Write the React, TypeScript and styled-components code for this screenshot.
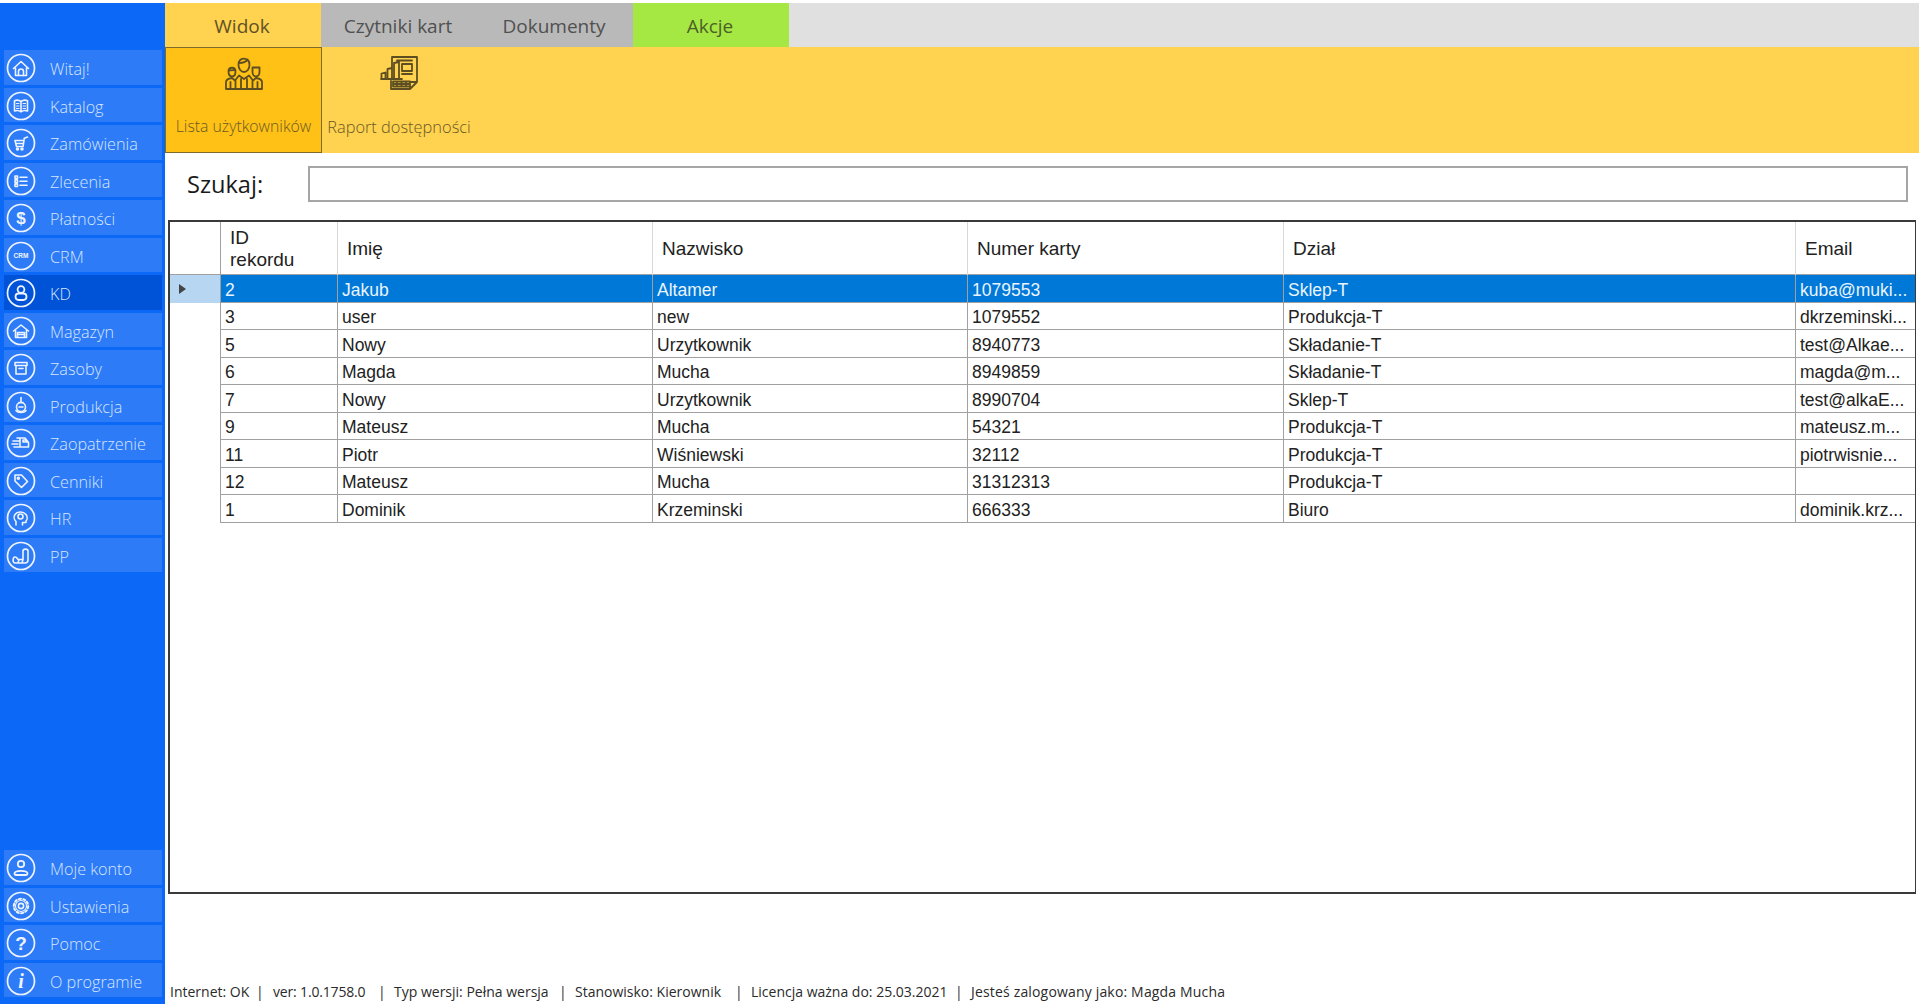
import React from "react";
import styled, { createGlobalStyle } from "styled-components";

const Global = createGlobalStyle`
  html, body { margin: 0; padding: 0; background: #fff; }
  * { box-sizing: border-box; }
  #root { width: 1919px; height: 1004px; overflow: hidden; }
`;

const Page = styled.div`
  display: grid;
  grid-template-columns: 165px 1fr;
  height: 1004px;
  padding-top: 3px;
  background: #fff;
`;

const Sidebar = styled.nav`
  display: flex;
  flex-direction: column;
  background: #0c69f8;
  padding: 47px 3px 7px 4px;
`;

const NavGroup = styled.div<{ $bottom?: boolean }>`
  display: flex;
  flex-direction: column;
  gap: 3px;
  margin-top: ${(p) => (p.$bottom ? "auto" : "0")};
`;

const NavItem = styled.div<{ $active?: boolean }>`
  display: flex;
  align-items: center;
  height: 34.5px;
  padding-left: 2px;
  gap: 14px;
  background: ${(p) => (p.$active ? "#0052d6" : "#2d7bf7")};
  color: #d8e6ff;
  font: 300 16.2px "Open Sans", sans-serif;
  white-space: nowrap;
`;

const NavLabel = styled.span`
  padding-top: 4px;
`;

const Ring = styled.svg`
  flex: none;
  width: 30px;
  height: 30px;
  margin-top: 1.5px;
  fill: none;
  stroke: #eef4ff;
  stroke-width: 1.6;
  stroke-linecap: round;
  stroke-linejoin: round;
  overflow: visible;
`;

const Main = styled.main`
  display: flex;
  flex-direction: column;
  min-width: 0;
`;

const TabBar = styled.div`
  display: flex;
  height: 44px;
  background: #e0e0e0;
`;

const Tab = styled.div<{ $bg: string; $fg: string }>`
  width: 156px;
  display: flex;
  align-items: center;
  justify-content: center;
  padding: 1px 2px 0 0;
  background: ${(p) => p.$bg};
  color: ${(p) => p.$fg};
  font: 400 19px "Open Sans", sans-serif;
`;

const Toolbar = styled.div`
  display: flex;
  height: 106px;
  background: #ffd24f;
`;

const ToolButton = styled.div<{ $selected?: boolean }>`
  width: ${(p) => (p.$selected ? "157px" : "154px")};
  display: flex;
  flex-direction: column;
  align-items: center;
  padding-top: 8px;
  background: ${(p) => (p.$selected ? "#ffc116" : "transparent")};
  box-shadow: ${(p) => (p.$selected ? "inset 0 0 0 1px #7d6a2c" : "none")};
  color: #6a5925;
  font: 300 ${(p) => (p.$selected ? "15.8px" : "16.4px")} "Open Sans", sans-serif;
  white-space: nowrap;
`;

const ToolIcon = styled.svg`
  width: 38px;
  height: 36px;
  fill: none;
  stroke: #5d4e22;
  stroke-width: 1.8;
  stroke-linejoin: round;
  stroke-linecap: round;
  margin-bottom: 24px;
`;

const SearchRow = styled.div`
  display: flex;
  align-items: center;
  height: 48px;
  margin-top: 7px;
  padding: 0 11px 0 22px;
`;

const SearchLabel = styled.label`
  width: 121px;
  color: #1a1a1a;
  font: 400 23.6px "Open Sans", sans-serif;
`;

const SearchInput = styled.div`
  flex: 1;
  height: 36px;
  border: 2px solid #a6a6a6;
  background: #fff;
`;

const Grid = styled.div`
  height: 674px;
  margin: 12px 3px 0 3px;
  border: 2px solid #3a3a3a;
  border-right-width: 1px;
  font-family: "Liberation Sans", Arial, sans-serif;
  color: #222;
`;

const columns = "51px 117px 315px 315px 316px 512px 1fr";

const HeadRow = styled.div`
  display: grid;
  grid-template-columns: ${columns};
  height: 53px;
`;

const HeadCell = styled.div`
  display: flex;
  align-items: center;
  padding-left: 9px;
  border-right: 1px solid #d8d8d8;
  font-size: 19px;
  line-height: 22px;
  white-space: pre-line;
  &:first-child { border-right-color: #a0a0a0; }
  &:last-child { border-right: 0; }
`;

const DataRow = styled.div<{ $selected?: boolean }>`
  display: grid;
  grid-template-columns: ${columns};
  height: 27.5px;
  background: ${(p) => (p.$selected ? "#0078d7" : "#fff")};
  color: ${(p) => (p.$selected ? "#eaf4ff" : "#222")};
  box-shadow: 0 -1px 0 #a0a0a0, inset 0 -1px 0 #a0a0a0;
`;

const Cell = styled.div`
  display: flex;
  align-items: center;
  padding: 3px 0 0 4px;
  border-right: 1px solid #a0a0a0;
  font-size: 17.5px;
  white-space: nowrap;
  overflow: hidden;
  &:last-child { border-right: 0; }
`;

const RowHeader = styled.div<{ $selected?: boolean }>`
  display: flex;
  align-items: center;
  padding-left: 9px;
  border-right: 1px solid #a0a0a0;
  background: ${(p) => (p.$selected ? "#b6d6f2" : "#fff")};
`;

const Arrow = styled.span`
  width: 0;
  height: 0;
  border-style: solid;
  border-width: 5.5px 0 5.5px 7px;
  border-color: transparent transparent transparent #444;
`;

const Status = styled.footer`
  display: flex;
  align-items: center;
  margin-top: auto;
  height: 40px;
  padding: 14px 0 0 5px;
  color: #2a2a2a;
  font: 400 14px "Open Sans", sans-serif;
  white-space: nowrap;
`;

const StatusPart = styled.span<{ $w: number; $ls: number }>`
  width: ${(p) => p.$w}px;
  letter-spacing: ${(p) => p.$ls}px;
  flex: none;
`;

const Bar = styled.span<{ $wide?: boolean }>`
  width: ${(p) => (p.$wide ? "17px" : "16px")};
  flex: none;
`;

type N = { label: string; icon: React.ReactNode; active?: boolean };

const tx = { fill: "#eef4ff", stroke: "none", textAnchor: "middle" as const, fontFamily: "'Liberation Sans', sans-serif" };

const top: N[] = [
  { label: "Witaj!", icon: <><path d="M7.500 15.500 15 8.500l7.500 7M9.500 14.500V22.500h11v-8" /><path d="M12.500 22.500v-4a2.500 2.500 0 0 1 5 0v4" /></> },
  { label: "Katalog", icon: <><path d="M15 10.500c-1.800-1.400-4.500-1.600-6.500-.8V20c2-.8 4.700-.6 6.500.8 1.800-1.400 4.500-1.600 6.500-.8V9.700c-2-.8-4.700-.6-6.500.8zM15 10.500v10.300" /><path d="M10.500 12.500h2.500M10.500 15h2.500M10.500 17.500h2.500M17 12.500h2.500M17 15h2.500M17 17.500h2.500" strokeWidth="1.100" /></> },
  { label: "Zamówienia", icon: <><path d="M21.500 9l-3.200 1.200-1.200 8.300H10.500L9 12.500h8.800M10 15.500h7.400" /><circle cx="11.500" cy="21" r="1" /><circle cx="16" cy="21" r="1" /></> },
  { label: "Zlecenia", icon: <path d="M9 10h2.500v2.500H9zM9 14h2.500v2.500H9zM9 18h2.500v2.500H9zM14 11.200h7M14 15.200h7M14 19.200h7" /> },
  { label: "Płatności", icon: <text x="15" y="21" fontSize="17" fontWeight="700" {...tx}>$</text> },
  { label: "CRM", icon: <text x="15" y="17" fontSize="6.500" fontWeight="700" {...tx}>CRM</text> },
  { label: "KD", active: true, icon: <><circle cx="15" cy="11.500" r="3.400" strokeWidth="1.800" /><rect x="9.500" y="15.500" width="11" height="6.500" rx="3.200" strokeWidth="1.800" /></> },
  { label: "Magazyn", icon: <path d="M7.500 15 15 9l7.500 6M9.500 14v7.500h11V14M11.500 21.500V16.500h7v5M11.500 18.500h7" /> },
  { label: "Zasoby", icon: <path d="M9 9.500h12v3H9zM10 12.500V21h10v-8.500M13 15.500h4" /> },
  { label: "Produkcja", icon: <><path d="M15 6.500v5M13 11.500h4" /><circle cx="15" cy="16" r="4.500" /><path d="M10 19.500c1 2.500 9 2.500 10 0M13 16h4" /></> },
  { label: "Zaopatrzenie", icon: <path d="M11 10h8l3.500 4.500V19h-14M7 13h6M6 16h6M8 19h4M14 10v9M17 12h2.500l1.500 2h-4z" /> },
  { label: "Cenniki", icon: <><path d="M9 9h6.500l6 6.500-6 6-6.500-6.500z" /><circle cx="12.300" cy="12.300" r="1" /></> },
  { label: "HR", icon: <><path d="M10 22v-3.500c-2-2-2.500-5-1-7 2-3 8-3.500 11 0 1.500 2 1.500 5 0 6.500v1.500h-3.500V22" /><circle cx="14.500" cy="13.500" r="2.500" /></> },
  { label: "PP", icon: <path d="M9 22c-2.500 0-2.500-6 0-6s2 2.500 3.500 2.500h4.500V10c0-2.500 5-2.500 5 0v9c0 2-1 3-3 3zM12 22l1-3.500M16 22l1-3.500" /> },
];

const bottom: N[] = [
  { label: "Moje konto", icon: <><circle cx="15" cy="11" r="3.200" strokeWidth="1.800" /><path d="M8.500 20.500c0-3.500 13-3.500 13 0 0 1-.5 1.500-1.500 1.500H10c-1 0-1.500-.5-1.500-1.500z" strokeWidth="1.800" /></> },
  { label: "Ustawienia", icon: <><circle cx="15" cy="15" r="2.600" /><circle cx="15" cy="15" r="5.500" strokeWidth="1.200" /><circle cx="15" cy="15" r="7.200" strokeWidth="2" strokeDasharray="2.200 2.300" /></> },
  { label: "Pomoc", icon: <text x="15" y="21.500" fontSize="19" fontWeight="700" {...tx}>?</text> },
  { label: "O programie", icon: <text x="15" y="22" fontSize="20" fontWeight="700" fontStyle="italic" fontFamily="'Liberation Serif', serif" textAnchor="middle" fill="#eef4ff" stroke="none">i</text> },
];

const NavEntry = ({ label, icon, active }: N) => (
  <NavItem $active={active}>
    <Ring viewBox="0 0 30 30">
      <circle cx="15" cy="15" r="13.500" strokeWidth="1.700" />
      {icon}
    </Ring>
    <NavLabel>{label}</NavLabel>
  </NavItem>
);

const rows = [
  ["2", "Jakub", "Altamer", "1079553", "Sklep-T", "kuba@muki..."],
  ["3", "user", "new", "1079552", "Produkcja-T", "dkrzeminski..."],
  ["5", "Nowy", "Urzytkownik", "8940773", "Składanie-T", "test@Alkae..."],
  ["6", "Magda", "Mucha", "8949859", "Składanie-T", "magda@m..."],
  ["7", "Nowy", "Urzytkownik", "8990704", "Sklep-T", "test@alkaE..."],
  ["9", "Mateusz", "Mucha", "54321", "Produkcja-T", "mateusz.m..."],
  ["11", "Piotr", "Wiśniewski", "32112", "Produkcja-T", "piotrwisnie..."],
  ["12", "Mateusz", "Mucha", "31312313", "Produkcja-T", ""],
  ["1", "Dominik", "Krzeminski", "666333", "Biuro", "dominik.krz..."],
];

const heads = ["", "ID\nrekordu", "Imię", "Nazwisko", "Numer karty", "Dział", "Email"];

const status: [string, number, number][] = [
  ["Internet: OK", 86, 0],
  ["ver: 1.0.1758.0", 105, -0.17],
  ["Typ wersji: Pełna wersja", 165, 0],
  ["Stanowisko: Kierownik", 160, 0],
  ["Licencja ważna do: 25.03.2021", 204, 0],
  ["Jesteś zalogowany jako: Magda Mucha", 265, 0.17],
];

export default function App() {
  return (
    <>
      <Global />
      <Page>
        <Sidebar>
          <NavGroup>{top.map((n) => <NavEntry key={n.label} {...n} />)}</NavGroup>
          <NavGroup $bottom>{bottom.map((n) => <NavEntry key={n.label} {...n} />)}</NavGroup>
        </Sidebar>
        <Main>
          <TabBar>
            <Tab $bg="#ffd24f" $fg="#5f5127">Widok</Tab>
            <Tab $bg="#b9b9b9" $fg="#505050">Czytniki kart</Tab>
            <Tab $bg="#b9b9b9" $fg="#505050">Dokumenty</Tab>
            <Tab $bg="#a6e843" $fg="#4c5f2a">Akcje</Tab>
          </TabBar>
          <Toolbar>
            <ToolButton $selected>
              <ToolIcon viewBox="0 0 38 36">
                <path d="M13.500 10C12.500 2 24.500 1 24.500 10c0 4-2.500 7-5.500 7s-5.500-3-5.500-7zM14 8c3 0 7-1 8.500-3.500 1 1.500 2 2.500 2 3.500" />
                <path d="M3.500 16.500c0-5 7-5 7 0 0 3-1.500 5-3.500 5s-3.500-2-3.500-5zM3.500 15.500c2 0 5-1 7 0" />
                <path d="M27.500 12.500h7v4.500c0 2.500-1.500 4.500-3.500 4.500s-3.500-2-3.500-4.500z" />
                <path d="M1 34V27c0-2.500 3-3.500 6-4l3 2.500 4-5 5 3.500 5-3.500 4 5 3-2.500c3 .5 6 1.500 6 4v7zM1 34h36M5.500 27v7M10.500 25.500V34M16 24v10M22 24v10M27.500 25.500V34M32.500 27v7" />
              </ToolIcon>
              Lista użytkowników
            </ToolButton>
            <ToolButton>
              <ToolIcon viewBox="0 0 38 36">
                <path d="M12 13V2h25v25l-7 7H11v-8M37 27h-7v7M17 5.500h15M22 9h10v7H22zM22 19h10M1.500 24v-5.500l4-1V24zM7.500 24V14l4.500-1v11zM14 24V8l5-1v17zM1 24h21M13 26.500h17v5H13zM13 29h17M17 26.500v5M21.500 26.500v5M26 26.500v5" />
              </ToolIcon>
              Raport dostępności
            </ToolButton>
          </Toolbar>
          <SearchRow>
            <SearchLabel>Szukaj:</SearchLabel>
            <SearchInput />
          </SearchRow>
          <Grid>
            <HeadRow>
              {heads.map((h, i) => <HeadCell key={i}>{h}</HeadCell>)}
            </HeadRow>
            {rows.map((r, i) => (
              <DataRow key={i} $selected={i === 0}>
                <RowHeader $selected={i === 0}>{i === 0 && <Arrow />}</RowHeader>
                {r.map((c, j) => <Cell key={j}>{c}</Cell>)}
              </DataRow>
            ))}
          </Grid>
          <Status>
            {status.map(([t, w, ls], i) => (
              <React.Fragment key={t}>
                {i > 0 && <Bar $wide={i === 1}>|</Bar>}
                <StatusPart $w={w} $ls={ls}>{t}</StatusPart>
              </React.Fragment>
            ))}
          </Status>
        </Main>
      </Page>
    </>
  );
}
